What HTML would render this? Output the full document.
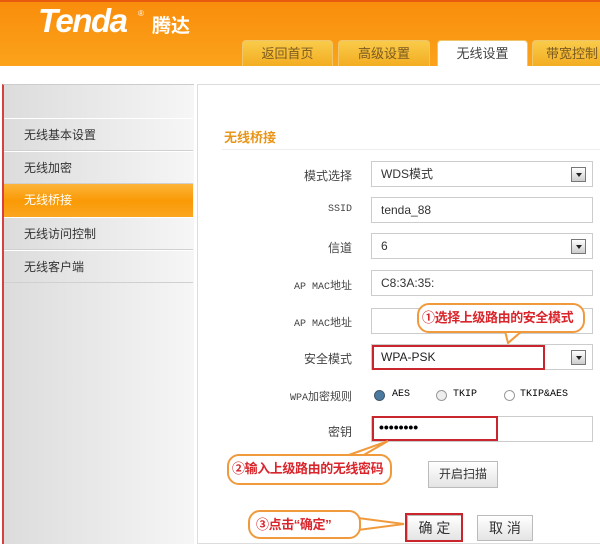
<!DOCTYPE html>
<html><head><meta charset="utf-8"><style>
*{margin:0;padding:0;box-sizing:border-box}
body{width:600px;height:544px;overflow:hidden;background:#fff;font-family:"Liberation Sans","Noto Sans CJK SC",sans-serif;position:relative}
.a{position:absolute}
.hdr{left:0;top:0;width:600px;height:66px;background:linear-gradient(#f98d0c,#fba31a);border-top:2px solid #e85a10}
.logo{left:38px;top:2px;color:#fff;font-size:33px;font-weight:bold;font-style:italic;letter-spacing:-1.5px}
.logo2{left:152px;top:11px;color:#fff;font-size:19px;font-weight:bold}
.tab{top:40px;height:26px;background:linear-gradient(#f9cb4a,#f3ad22);border:1px solid #f0c66a;border-bottom:none;border-radius:4px 4px 0 0;font-size:13px;color:#7a5a20;text-align:center;line-height:25px;white-space:nowrap;overflow:hidden}
.side{left:2px;top:84px;width:192px;height:460px;background:linear-gradient(90deg,#dcdcdc,#f6f6f6);border-left:2px solid #d84040;border-top:1px solid #ccc}
.it{left:4px;width:189px;height:33px;border-top:1px solid #fff;border-bottom:1px solid #d0d0d0;font-size:12px;color:#333;line-height:32px;padding-left:20px}
.panel{left:197px;top:84px;width:403px;height:460px;border:1px solid #ddd;border-right:none;background:#fff}
.lb{width:150px;left:202px;text-align:right;font-size:12px;color:#444}
.in{left:371px;width:222px;height:26px;border:1px solid #ccc;font-size:12px;color:#333;padding-left:9px;line-height:24px}
.dd{position:absolute;right:6px;top:5px;width:15px;height:15px;border:1px solid #777;background:linear-gradient(#fff,#ccc)}
.dd:after{content:"";position:absolute;left:4px;top:5px;border:3px solid transparent;border-top:4px solid #222}
.rb{border:2px solid #c8262c}
.bub{border:2px solid #f09a3c;border-radius:12px;background:#fff;color:#d8262c;font-weight:bold;font-size:13px;letter-spacing:-0.4px;line-height:26px;padding-left:3px;white-space:nowrap;overflow:hidden}
.btn{border:1px solid #bbb;background:linear-gradient(#fff,#e4e4e4);font-size:14px;color:#333;text-align:center}
.rad{width:11px;height:11px;border-radius:50%;border:1px solid #999;background:#eee;top:390px}
.mono{font-family:'Liberation Mono',monospace;font-size:10px}
</style></head><body>
<div class="a hdr"></div>
<div class="a logo">Tenda</div><div class="a" style="left:138px;top:9px;color:#fff;font-size:8px">®</div>
<div class="a logo2">腾达</div>
<div class="a tab" style="left:242px;width:91px">返回首页</div>
<div class="a tab" style="left:338px;width:92px">高级设置</div>
<div class="a tab" style="left:437px;width:91px;background:#fff;color:#444">无线设置</div>
<div class="a tab" style="left:532px;width:80px">带宽控制</div>

<div class="a side"></div>
<div class="a it" style="top:118px">无线基本设置</div>
<div class="a it" style="top:151px">无线加密</div>
<div class="a it" style="top:184px;background:linear-gradient(#fdb43a,#f99a05 50%,#fba520);color:#fff;border:none">无线桥接</div>
<div class="a it" style="top:217px">无线访问控制</div>
<div class="a it" style="top:250px">无线客户端</div>

<div class="a panel"></div>
<div class="a" style="left:224px;top:127px;color:#e8961a;font-size:13px;font-weight:bold">无线桥接</div>
<div class="a" style="left:222px;top:149px;width:378px;height:1px;background:#eee"></div>

<div class="a lb" style="top:167px">模式选择</div>
<div class="a in" style="top:161px">WDS模式<span class="dd"></span></div>
<div class="a lb mono" style="top:204px">SSID</div>
<div class="a in" style="top:197px">tenda_88</div>
<div class="a lb" style="top:239px">信道</div>
<div class="a in" style="top:233px">6<span class="dd"></span></div>
<div class="a lb" style="top:277px;font-size:11px"><span class="mono">AP MAC</span>地址</div>
<div class="a in" style="top:270px">C8:3A:35:</div>
<div class="a lb" style="top:314px;font-size:11px"><span class="mono">AP MAC</span>地址</div>
<div class="a in" style="top:308px"></div>
<div class="a lb" style="top:350px">安全模式</div>
<div class="a in" style="top:344px"><span class="dd"></span></div>
<div class="a rb" style="left:372px;top:345px;width:173px;height:25px;font-size:12px;padding-left:7px;line-height:21px;color:#222">WPA-PSK</div>
<div class="a lb" style="top:388px;font-size:11px"><span class="mono">WPA</span>加密规则</div>
<div class="a rad" style="left:374px;background:#4a7aa0;border-color:#456"></div>
<div class="a mono" style="left:392px;top:389px">AES</div>
<div class="a rad" style="left:436px"></div>
<div class="a mono" style="left:453px;top:389px">TKIP</div>
<div class="a rad" style="left:504px;background:#fff"></div>
<div class="a mono" style="left:520px;top:389px">TKIP&amp;AES</div>
<div class="a lb" style="top:423px">密钥</div>
<div class="a in" style="top:416px"></div>
<div class="a rb" style="left:372px;top:416px;width:126px;height:25px;font-size:14px;padding-left:5px;line-height:19px;font-weight:bold">••••••••</div>
<div class="a btn" style="left:428px;top:461px;width:70px;height:27px;line-height:25px;font-size:12px">开启扫描</div>
<div class="a btn" style="left:407px;top:515px;width:55px;height:26px;line-height:24px">确 定</div>
<div class="a rb" style="left:405px;top:513px;width:58px;height:29px"></div>
<div class="a btn" style="left:477px;top:515px;width:56px;height:26px;line-height:24px">取 消</div>

<svg class="a" style="left:0;top:0" width="600" height="544">
<polygon points="505,331 522,331 508,343" fill="#fff" stroke="#f09a3c" stroke-width="2"/>
<polygon points="346,456 362,456 388,441" fill="#fff" stroke="#f09a3c" stroke-width="2"/>
<polygon points="358,518 358,530 404,524" fill="#fff" stroke="#f09a3c" stroke-width="2"/>
</svg>
<div class="a bub" style="left:417px;top:303px;width:168px;height:30px">①选择上级路由的安全模式</div>
<div class="a bub" style="left:227px;top:454px;width:165px;height:31px">②输入上级路由的无线密码</div>
<div class="a bub" style="left:248px;top:510px;width:113px;height:29px;padding-left:6px">③点击“确定”</div>
</body></html>
